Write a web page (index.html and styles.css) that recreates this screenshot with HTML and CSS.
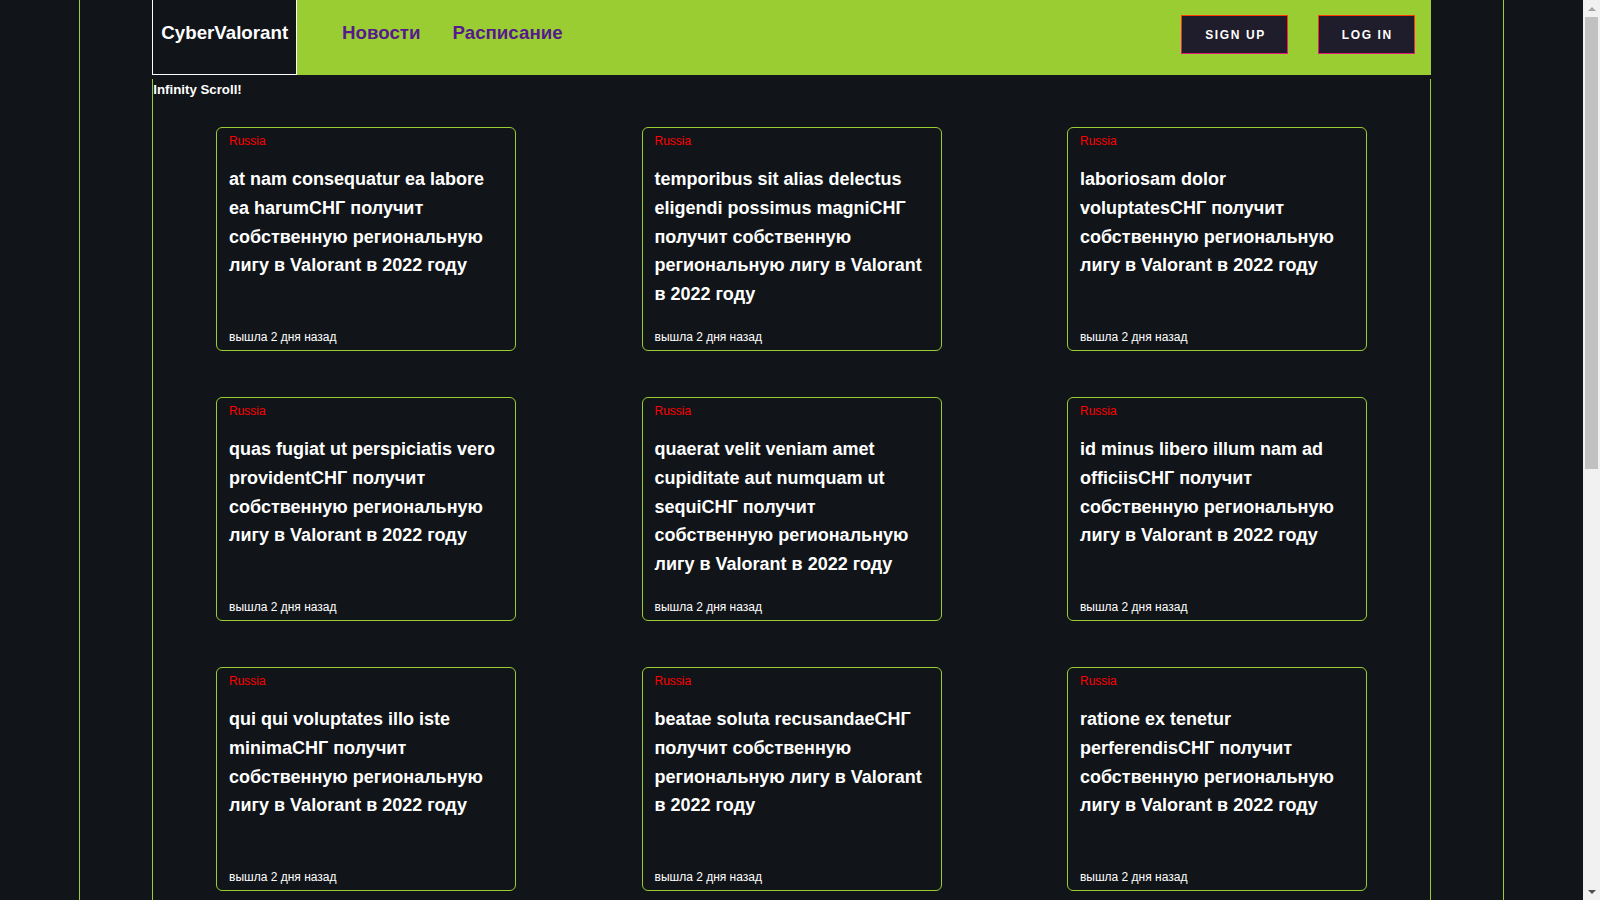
FILE: index.html
```html
<!DOCTYPE html>
<html lang="ru">
<head>
<meta charset="utf-8">
<title>CyberValorant</title>
<link rel="stylesheet" href="styles.css">
</head>
<body>
<div class="page">
  <header class="topbar">
    <div class="logo">CyberValorant</div>
    <nav class="nav">
      <a class="nav-link" href="#">Новости</a>
      <a class="nav-link" href="#">Расписание</a>
    </nav>
    <div class="auth">
      <button class="auth-btn">Sign up</button>
      <button class="auth-btn">Log in</button>
    </div>
  </header>
  <main class="feed">
    <h5 class="feed-title">Infinity Scroll!</h5>
    <div class="grid">
      <article class="card"><div class="country">Russia</div><h3 class="title">at nam consequatur ea labore ea harumСНГ получит собственную региональную лигу в Valorant в 2022 году</h3><div class="date">вышла 2 дня назад</div></article>
      <article class="card"><div class="country">Russia</div><h3 class="title">temporibus sit alias delectus eligendi possimus magniСНГ получит собственную региональную лигу в Valorant в 2022 году</h3><div class="date">вышла 2 дня назад</div></article>
      <article class="card"><div class="country">Russia</div><h3 class="title">laboriosam dolor voluptatesСНГ получит собственную региональную лигу в Valorant в 2022 году</h3><div class="date">вышла 2 дня назад</div></article>
      <article class="card"><div class="country">Russia</div><h3 class="title">quas fugiat ut perspiciatis vero providentСНГ получит собственную региональную лигу в Valorant в 2022 году</h3><div class="date">вышла 2 дня назад</div></article>
      <article class="card"><div class="country">Russia</div><h3 class="title">quaerat velit veniam amet cupiditate aut numquam ut sequiСНГ получит собственную региональную лигу в Valorant в 2022 году</h3><div class="date">вышла 2 дня назад</div></article>
      <article class="card"><div class="country">Russia</div><h3 class="title">id minus libero illum nam ad officiisСНГ получит собственную региональную лигу в Valorant в 2022 году</h3><div class="date">вышла 2 дня назад</div></article>
      <article class="card"><div class="country">Russia</div><h3 class="title">qui qui voluptates illo iste minimaСНГ получит собственную региональную лигу в Valorant в 2022 году</h3><div class="date">вышла 2 дня назад</div></article>
      <article class="card"><div class="country">Russia</div><h3 class="title">beatae soluta recusandaeСНГ получит собственную региональную лигу в Valorant в 2022 году</h3><div class="date">вышла 2 дня назад</div></article>
      <article class="card"><div class="country">Russia</div><h3 class="title">ratione ex tenetur perferendisСНГ получит собственную региональную лигу в Valorant в 2022 году</h3><div class="date">вышла 2 дня назад</div></article>
      <article class="card"><div class="country">Russia</div><h3 class="title">provident vel ut sit ratione estСНГ получит собственную региональную лигу в Valorant в 2022 году</h3><div class="date">вышла 2 дня назад</div></article>
      <article class="card"><div class="country">Russia</div><h3 class="title">explicabo et eos deleniti nostrum ab id repellendusСНГ получит собственную региональную лигу в Valorant в 2022 году</h3><div class="date">вышла 2 дня назад</div></article>
      <article class="card"><div class="country">Russia</div><h3 class="title">eos dolorem iste accusantium est eaqueСНГ получит собственную региональную лигу в Valorant в 2022 году</h3><div class="date">вышла 2 дня назад</div></article>
      <article class="card"><div class="country">Russia</div><h3 class="title">dolorem dolore est ipsamСНГ получит собственную региональную лигу в Valorant в 2022 году</h3><div class="date">вышла 2 дня назад</div></article>
      <article class="card"><div class="country">Russia</div><h3 class="title">nesciunt iure omnis dolorem tempora et accusantiumСНГ получит собственную региональную лигу в Valorant в 2022 году</h3><div class="date">вышла 2 дня назад</div></article>
      <article class="card"><div class="country">Russia</div><h3 class="title">optio molestias id quia eumСНГ получит собственную региональную лигу в Valorant в 2022 году</h3><div class="date">вышла 2 дня назад</div></article>
      <article class="card"><div class="country">Russia</div><h3 class="title">et ea vero quia laudantium autemСНГ получит собственную региональную лигу в Valorant в 2022 году</h3><div class="date">вышла 2 дня назад</div></article>
      <article class="card"><div class="country">Russia</div><h3 class="title">in quibusdam tempore odit est doloremСНГ получит собственную региональную лигу в Valorant в 2022 году</h3><div class="date">вышла 2 дня назад</div></article>
      <article class="card"><div class="country">Russia</div><h3 class="title">dolorum ut in voluptas mollitia et saepe quo animiСНГ получит собственную региональную лигу в Valorant в 2022 году</h3><div class="date">вышла 2 дня назад</div></article>
    </div>
  </main>
</div>
<div class="scrollbar" aria-hidden="true">
  <div class="sb-btn"><span class="sb-arrow-up"></span></div>
  <div class="sb-track"><div class="sb-thumb"></div></div>
  <div class="sb-btn"><span class="sb-arrow-down"></span></div>
</div>
</body>
</html>
```

FILE: styles.css
```css
html {
  background: #111519;
}

body {
  margin: 0;
  padding-right: 17px;
  background: #111519;
  color: #ffffff;
  font-family: "Liberation Sans", Arial, sans-serif;
}

.scrollbar {
  position: fixed;
  top: 0;
  right: 0;
  width: 17px;
  height: 100vh;
  display: flex;
  flex-direction: column;
  background: #f1f1f1;
}

.sb-btn {
  height: 17px;
  flex: none;
  display: flex;
  align-items: center;
  justify-content: center;
}

.sb-arrow-up {
  width: 0;
  height: 0;
  border-left: 4px solid transparent;
  border-right: 4px solid transparent;
  border-bottom: 4px solid #a3a3a3;
}

.sb-arrow-down {
  width: 0;
  height: 0;
  border-left: 4px solid transparent;
  border-right: 4px solid transparent;
  border-top: 4px solid #505050;
}

.sb-track {
  flex: 1;
  padding: 0 2px;
}

.sb-thumb {
  height: 452px;
  background: #c1c1c1;
}

.page {
  box-sizing: border-box;
  width: 90%;
  margin: 0 auto;
  min-height: 100vh;
  border-left: 1px solid #9acd32;
  border-right: 1px solid #9acd32;
}

.topbar {
  box-sizing: border-box;
  width: calc(90% - 2px);
  height: 75px;
  margin: 0 auto;
  display: flex;
  align-items: center;
  background: #9acd32;
}

.logo {
  align-self: stretch;
  box-sizing: border-box;
  display: flex;
  align-items: center;
  padding: 0 8px 8px;
  border: 1px solid #ffffff;
  border-top: 0;
  background: #111519;
  color: #ffffff;
  font-size: 18.72px;
  font-weight: bold;
}

.nav {
  display: flex;
  gap: 32px;
  margin-left: 45px;
  margin-bottom: 10px;
}

.nav-link {
  color: #551a8b;
  font-size: 18.72px;
  font-weight: bold;
  text-decoration: none;
}

.auth {
  display: flex;
  gap: 30px;
  margin-left: auto;
  margin-right: 16px;
  margin-bottom: 6px;
}

.auth-btn {
  box-sizing: border-box;
  height: 39px;
  padding: 0 21px 0 23px;
  background: #1f1c2b;
  color: #ffffff;
  border: 1px solid #ff3c00;
  border-image: linear-gradient(#ff3c00, #e8157d) 1;
  font-family: "Liberation Sans", Arial, sans-serif;
  font-size: 12px;
  font-weight: bold;
  letter-spacing: 1.6px;
  text-transform: uppercase;
  cursor: pointer;
}

.feed {
  box-sizing: border-box;
  width: calc(90% - 2px);
  margin: 4px auto 0;
  border-left: 1px solid #9acd32;
  border-right: 1px solid #9acd32;
}

.feed-title {
  margin: 0;
  padding-top: 3px;
  font-size: 13.28px;
  font-weight: bold;
}

.grid {
  display: grid;
  grid-template-columns: repeat(3, 1fr);
  justify-items: center;
  row-gap: 46px;
  margin-top: 30px;
  padding-bottom: 22px;
}

.card {
  box-sizing: border-box;
  width: 300px;
  height: 224px;
  padding: 6px 12px 6px;
  display: flex;
  flex-direction: column;
  border: 1px solid #9acd32;
  border-radius: 6px;
}

.country {
  color: #ff0000;
  font-size: 12px;
}

.title {
  margin: 17px 0 0;
  font-size: 18px;
  font-weight: bold;
  line-height: 28.8px;
}

.date {
  margin-top: auto;
  font-size: 12px;
}
```
